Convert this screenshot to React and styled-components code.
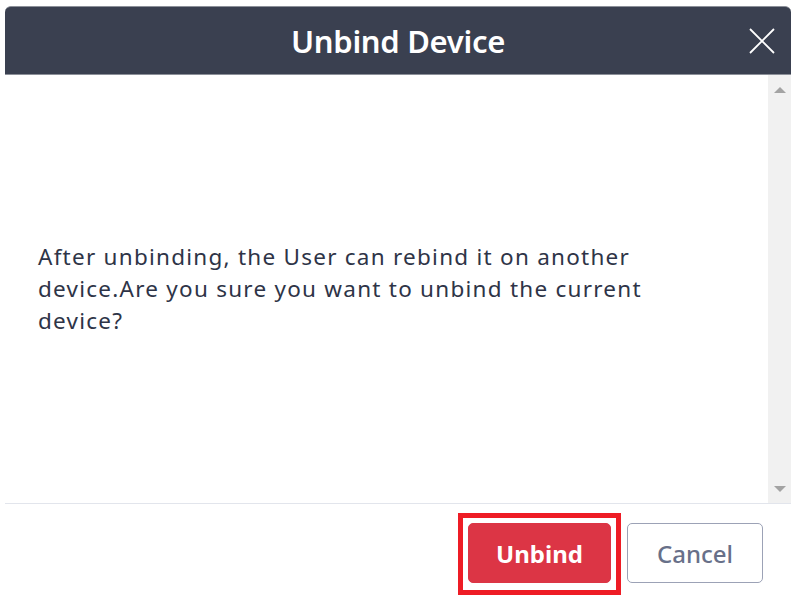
import React from "react";
import styled, { createGlobalStyle } from "styled-components";

const Global = createGlobalStyle`
  html, body { margin: 0; padding: 0; background: #ffffff; }
  body { font-family: "Noto Sans", "Open Sans", sans-serif; }
`;

const Dialog = styled.div`
  margin: 6px 0 0 5px;
  width: 786px;
  display: flex;
  flex-direction: column;
  background: #fff;
`;

const Header = styled.div`
  position: relative;
  height: 69px;
  background: #3a4050;
  border-top: 1px solid #8c9099;
  border-bottom: 1px solid #8c9099;
  border-radius: 6px 6px 0 0;
  display: flex;
  align-items: center;
  justify-content: center;
  box-sizing: border-box;
`;

const Title = styled.h1`
  margin: 0;
  font-family: "Noto Sans", sans-serif;
  font-weight: 600;
  font-size: 31px;
  color: #ffffff;
  letter-spacing: -0.3px;
`;

const Close = styled.button`
  position: absolute;
  right: 14px;
  top: 50%;
  transform: translateY(-50%);
  width: 30px;
  height: 30px;
  padding: 0;
  border: none;
  background: transparent;
  display: flex;
  align-items: center;
  justify-content: center;
  cursor: pointer;
`;

const BodyRow = styled.div`
  display: flex;
  height: 428px;
`;

const Content = styled.div`
  flex: 1;
  display: flex;
  align-items: center;
  padding: 0 33px;
`;

const Message = styled.p`
  margin: 0;
  max-width: 660px;
  font-size: 22.5px;
  line-height: 32px;
  color: #2e3447;
  letter-spacing: 1.25px;
`;

const Scrollbar = styled.div`
  width: 23px;
  background: #f1f1f1;
  display: flex;
  flex-direction: column;
  justify-content: space-between;
  align-items: center;
  padding: 12px 0 11px;
  box-sizing: border-box;
`;

const Arrow = styled.span`
  width: 0;
  height: 0;
  border-left: 6px solid transparent;
  border-right: 6px solid transparent;
  ${(p) =>
    p.$down
      ? "border-top: 6px solid #a3a3a3;"
      : "border-bottom: 6px solid #a3a3a3;"}
`;

const Divider = styled.div`
  height: 1px;
  background: #e2e5ec;
`;

const Footer = styled.div`
  display: flex;
  justify-content: flex-end;
  align-items: center;
  gap: 6px;
  padding: 9px 28px 0 0;
`;

const Highlight = styled.div`
  border: 5px solid #ee1c25;
  padding: 5px 5px 7px 5px;
  display: flex;
`;

const Button = styled.button`
  height: 60px;
  border-radius: 5px;
  font-family: "Noto Sans", sans-serif;
  font-size: 24px;
  cursor: pointer;
  box-sizing: border-box;
  ${(p) =>
    p.$danger
      ? `
    width: 143px;
    background: #dc3545;
    border: 1px solid #dc3545;
    color: #ffffff;
    font-weight: 700;
  `
      : `
    width: 136px;
    margin-bottom: 2px;
    background: #ffffff;
    border: 1px solid #9ca2b6;
    color: #687089;
    font-weight: 500;
  `}
`;

export default function App() {
  return (
    <>
      <Global />
      <Dialog>
        <Header>
          <Title>Unbind Device</Title>
          <Close aria-label="close">
            <svg width="28" height="28" viewBox="0 0 28 28">
              <path d="M2 2 L26 26 M26 2 L2 26" stroke="#ffffff" strokeWidth="1.8" fill="none" />
            </svg>
          </Close>
        </Header>
        <BodyRow>
          <Content>
            <Message>
              After unbinding, the User can rebind it on another device.Are you sure you want to unbind the current device?
            </Message>
          </Content>
          <Scrollbar>
            <Arrow />
            <Arrow $down />
          </Scrollbar>
        </BodyRow>
        <Divider />
        <Footer>
          <Highlight>
            <Button $danger>Unbind</Button>
          </Highlight>
          <Button>Cancel</Button>
        </Footer>
      </Dialog>
    </>
  );
}
